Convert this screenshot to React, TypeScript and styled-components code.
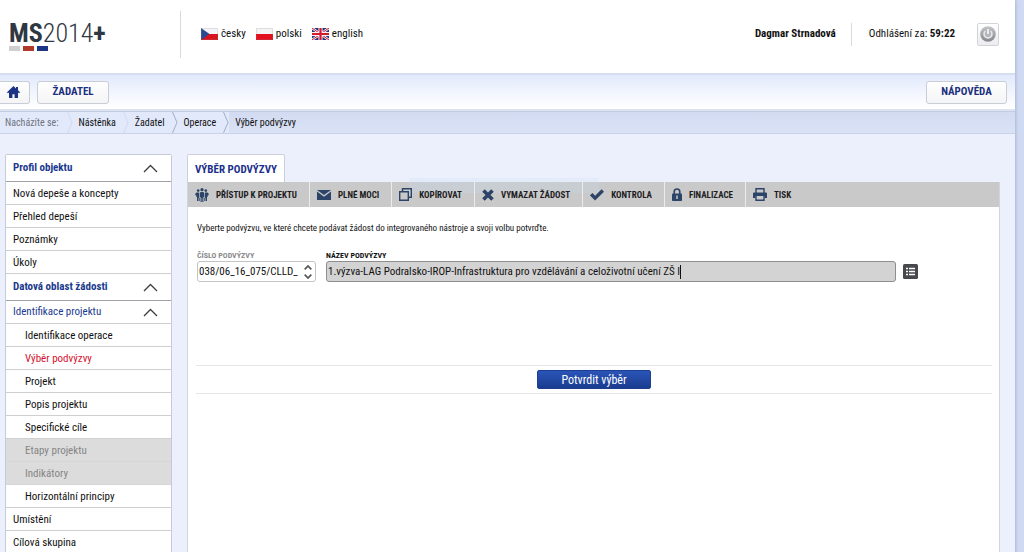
import React from "react";
import styled, { createGlobalStyle, css } from "styled-components";

const GlobalStyle = createGlobalStyle`
  * { box-sizing: border-box; }
  body {
    margin: 0;
    background: #d0daf2;
    color: #111;
    font: 11px/14px "Roboto Condensed", Roboto, "Liberation Sans", sans-serif;
    overflow: hidden;
  }
  button, input { font: inherit; color: inherit; }
  a { color: inherit; text-decoration: none; }
`;

const Shell = styled.div`
  margin-right: 9px;
  min-height: 100vh;
  background: #ecf0fc;
  box-shadow: 1px 0 3px #a9b5d6;
`;

const Header = styled.header`
  display: flex;
  align-items: center;
  height: 73px;
  padding: 0 16px 5px 9px;
  background: #fff;
`;

const Logo = styled.a`
  display: flex;
  flex-direction: column;
  width: 171px;
  padding-top: 3px;
  color: #2f3742;
  font-size: 26px;
  line-height: 25px;
  font-weight: 300;
  b { font-weight: 700; }
`;

const LogoBars = styled.span`
  display: flex;
  gap: 3px;
`;

const LogoBar = styled.i<{ $color: string }>`
  width: 11px;
  height: 5px;
  background: ${(p) => p.$color};
`;

const Divider = styled.span<{ $tall?: boolean }>`
  width: 1px;
  height: ${(p) => (p.$tall ? 47 : 23)}px;
  background: #d9d9dc;
`;

const Languages = styled.nav`
  display: flex;
  gap: 10px;
  margin-left: 20px;
`;

const Language = styled.a`
  display: flex;
  align-items: center;
  gap: 3px;
`;

const Account = styled.div`
  display: flex;
  align-items: center;
  margin-left: auto;
`;

const Timer = styled.span`
  margin: 0 22px 0 17px;
`;

const UserName = styled.b`
  margin-right: 15px;
`;

const PowerButton = styled.button`
  display: grid;
  place-items: center;
  width: 22px;
  height: 23px;
  padding: 0;
  border: 1px solid #d2d4da;
  border-radius: 2px;
  background: linear-gradient(#fff, #ececee);
`;

const NavBar = styled.nav`
  display: flex;
  align-items: center;
  justify-content: space-between;
  height: 38px;
  padding-right: 8px;
  border-top: 2px solid #d5deee;
  border-bottom: 2px solid #dce3f1;
  background: linear-gradient(#e1e9fc, #f4f7fe 60%, #fff);
`;

const NavGroup = styled.div`
  display: flex;
  gap: 7px;
`;

const NavButton = styled.button<{ $width: number; $flush?: boolean }>`
  display: grid;
  place-items: center;
  width: ${(p) => p.$width}px;
  height: 23px;
  padding: 0;
  border: 1px solid #c9cdd6;
  border-radius: 3px;
  background: linear-gradient(#fff, #f4f4f6);
  color: #1b2f80;
  font-weight: 700;
  ${(p) => p.$flush && css`
    padding-right: 2px;
    border-left: 0;
    border-radius: 0 3px 3px 0;
  `}
`;

const Breadcrumbs = styled.nav`
  display: flex;
  align-items: stretch;
  height: 23px;
  border-top: 1px solid #c2cbe2;
  border-bottom: 1px solid #c8d2ea;
  background: linear-gradient(#d2dbf1, #dae2f5);
  font-size: 10px;
  line-height: 21px;
`;

const Crumb = styled.span<{ $muted?: boolean; $open?: boolean }>`
  display: flex;
  padding-left: ${(p) => (p.$muted ? 5 : 6)}px;
  gap: ${(p) => (p.$muted ? 8 : 7)}px;
  color: ${(p) => (p.$muted ? "#70747f" : "#111")};
  background: ${(p) => (p.$open ? "transparent" : "#e2e9fa")};
  svg { display: block; }
`;

const Body = styled.div`
  display: flex;
  align-items: flex-start;
  gap: 15px;
  padding: 20px 15px 0 5px;
`;

const Sidebar = styled.nav`
  flex: none;
  width: 167px;
  border: 1px solid #c6cad6;
  border-radius: 2px;
  background: #fff;
`;

const Group = styled.button<{ $strong?: boolean }>`
  display: flex;
  align-items: center;
  justify-content: space-between;
  width: 100%;
  height: ${(p) => (p.$strong ? 27 : 23)}px;
  padding: 0 13px 0 7px;
  border: 0;
  border-bottom: 1px solid ${(p) => (p.$strong ? "#9fa3a8" : "#cfcfcf")};
  background: #fff;
  color: #1b3a8e;
  font-weight: ${(p) => (p.$strong ? 700 : 400)};
`;

const Item = styled.a<{ $nested?: boolean; $current?: boolean; $disabled?: boolean }>`
  display: block;
  height: 23px;
  padding-left: ${(p) => (p.$nested ? 19 : 7)}px;
  border-bottom: 1px solid ${(p) => (p.$disabled ? "#d6d6d6" : "#cfcfcf")};
  background: ${(p) => (p.$disabled ? "#dcdcdc" : "#fff")};
  color: ${(p) => (p.$disabled ? "#858585" : p.$current ? "#d4122e" : "#111")};
  line-height: 23px;
`;

const Content = styled.main`
  flex: 1;
  min-width: 0;
`;

const Tab = styled.h1`
  width: max-content;
  height: 28px;
  margin: 0;
  padding: 1px 7px 0;
  border: 1px solid #cdd0da;
  border-bottom: 0;
  border-radius: 2px 2px 0 0;
  background: #fff;
  color: #1b2f8a;
  font-size: 11px;
  line-height: 28px;
`;

const Panel = styled.section`
  position: relative;
  min-height: calc(100vh - 181px);
  border: 1px solid #d0d4de;
  border-top: 0;
  border-bottom: 0;
  background: #fff;
`;

const FadingTip = styled.div`
  position: absolute;
  top: -4px;
  left: 221px;
  width: 190px;
  height: 15px;
  background: linear-gradient(90deg, #c4dcf044, #c4dcf033);
  pointer-events: none;
`;

const Toolbar = styled.div`
  display: flex;
  height: 25px;
  background: #c9c9c9;
`;

const Tool = styled.button`
  position: relative;
  z-index: 1;
  display: flex;
  align-items: center;
  gap: 7px;
  padding: 0 12px 0 7px;
  border: 0;
  border-right: 1px solid #ececec;
  background: none;
  color: #1d1d1f;
  font-size: 9px;
  font-weight: 700;
  white-space: nowrap;
  &:last-child { border-right: 0; }
`;

const Hint = styled.p`
  margin: 0;
  padding: 14px 9px 0;
  font-size: 9px;
`;

const Fields = styled.form`
  display: flex;
  align-items: flex-end;
  padding: 16px 81px 0 9px;
`;

const Field = styled.div<{ $width?: number }>`
  flex: ${(p) => (p.$width ? `0 0 ${p.$width}px` : "1")};
  min-width: 0;
  margin-right: 10px;
`;

const Label = styled.label<{ $muted?: boolean }>`
  display: block;
  color: ${(p) => (p.$muted ? "#8b8b8b" : "#111")};
  font-size: 8px;
  line-height: 10px;
  font-weight: 700;
`;

const InputBox = styled.div<{ $filled?: boolean }>`
  display: flex;
  align-items: center;
  height: 21px;
  padding: 1px 0 0 1px;
  border: 1px solid ${(p) => (p.$filled ? "#8e8e8e" : "#c4c4c4")};
  border-radius: 3px;
  background: ${(p) => (p.$filled ? "#d3d3d3" : "#fff")};
`;

const Input = styled.input<{ $fit?: boolean }>`
  flex: ${(p) => (p.$fit ? "0 1 auto" : "1")};
  min-width: 0;
  padding: 0;
  border: 0;
  outline: 0;
  background: none;
  font-size: 11px;
  ${(p) => p.$fit && css`
    field-sizing: content;
    caret-color: transparent;
  `}
`;

const Caret = styled.span`
  width: 1px;
  height: 14px;
  background: #111;
`;

const Spinner = styled.span`
  display: flex;
  flex-direction: column;
  gap: 4px;
  padding: 0 3px;
`;

const BareButton = styled.button`
  display: block;
  padding: 0;
  border: 0;
  background: none;
  svg { display: block; }
`;

const ListButton = styled(BareButton)`
  margin: 0 0 3px -3px;
`;

const Actions = styled.div`
  display: flex;
  justify-content: center;
  margin: 83px 7px 0 8px;
  padding: 4px 0;
  border-top: 1px solid #e6e6e6;
  border-bottom: 1px solid #e6e6e6;
`;

const Confirm = styled.button`
  width: 114px;
  height: 19px;
  padding: 0;
  border: 1px solid #1c3f91;
  border-radius: 2px;
  background: linear-gradient(#2a55b8, #1a3c90);
  color: #fff;
  font-size: 12px;
  line-height: 16px;
`;

const Chevron = () => (
  <svg width="15" height="9" viewBox="0 0 15 9" fill="none" stroke="#3c3f44" strokeWidth="1.3">
    <path d="M1 8 7.500 1.500 14 8" />
  </svg>
);

const SmallChevron = ({ down }: { down?: boolean }) => (
  <svg width="8" height="5" viewBox="0 0 8 5" fill="none" stroke="#555" strokeWidth="1.7">
    <path d={down ? "M.7.700 4 4 7.300.7" : "M.7 4.300 4 1 7.300 4.300"} />
  </svg>
);

const CrumbArrow = ({ faint }: { faint?: boolean }) => (
  <svg width="6" height="21" viewBox="0 0 6 21">
    <path d="M.5 0 5 10.500.5 21" fill="none" stroke={faint ? "#d0d9ef" : "#a3adc6"} />
  </svg>
);

const CzechFlag = () => (
  <svg width="17" height="12" viewBox="0 0 17 12">
    <path fill="#f4f4f8" d="M0 0h17v6H0z" />
    <path fill="#d8141e" d="M0 6h17v6H0z" />
    <path fill="#2a4a92" d="m0 0 8.500 6L0 12z" />
    <path fill="none" stroke="#8883" d="M.5.500h16v11H.5z" />
  </svg>
);

const PolishFlag = () => (
  <svg width="17" height="12" viewBox="0 0 17 12">
    <path fill="#f4f4f6" d="M0 0h17v6H0z" />
    <path fill="#e3101f" d="M0 6h17v6H0z" />
    <path fill="none" stroke="#8883" d="M.5.500h16v11H.5z" />
  </svg>
);

const BritishFlag = () => (
  <svg width="17" height="12" viewBox="0 0 17 12">
    <path fill="#28337e" d="M0 0h17v12H0z" />
    <path stroke="#f2eef5" strokeWidth="2.400" d="m0 0 17 12M17 0 0 12" />
    <path stroke="#d22034" strokeWidth="1" d="m0 0 17 12M17 0 0 12" />
    <path stroke="#f6f2f6" strokeWidth="4" d="M8.500 0v12M0 6h17" />
    <path stroke="#d8182c" strokeWidth="2.200" d="M8.500 0v12M0 6h17" />
  </svg>
);

const PowerIcon = () => (
  <svg width="16" height="16" viewBox="0 0 16 16" fill="none">
    <defs>
      <linearGradient id="power" x2="0" y2="1">
        <stop stopColor="#c3c5c9" />
        <stop offset="1" stopColor="#84878d" />
      </linearGradient>
    </defs>
    <circle cx="8" cy="8" r="7.800" fill="url(#power)" />
    <circle cx="8" cy="8" r="4.400" fill="#b4b6ba" />
    <path d="M5.400 5a4 4 0 1 0 5.200 0" stroke="#e8e9ea" strokeWidth="1.500" />
    <path d="M8 3v5" stroke="#fafafa" strokeWidth="1.600" />
  </svg>
);

const HomeIcon = () => (
  <svg width="13" height="12" viewBox="0 0 13 12" fill="#1b3486">
    <path d="M6.500 0 0 6.300l.9 1L2 6.400V12h3.400V8.300h2.200V12H11V6.400l1.100.900.900-1L11 4.300V1H9v1.400z" />
  </svg>
);

const PeopleIcon = () => (
  <svg width="14" height="14" viewBox="0 0 14 14" fill="#2c4468">
    <circle cx="7" cy="1.700" r="1.600" />
    <circle cx="3.200" cy="2.600" r="1.300" />
    <circle cx="10.800" cy="2.600" r="1.300" />
    <path d="M5.700 3.900h2.600l.9 1v4H8.400V14H7.300v-4h-.6v4H5.600V8.900h-.8v-4zM1.500 4.500h2.600v5.300h.6V13H3.600v-3h-.5v3H2V8.900l-.7-.1v-1.600H.3V5.700zM12.500 4.500H9.900v5.300h-.6V13h1.100v-3h.5v3H12V8.900l.7-.1v-1.600h1V5.700z" />
  </svg>
);

const MailIcon = () => (
  <svg width="14" height="10" viewBox="0 0 15 10" preserveAspectRatio="none" fill="#2c4468">
    <path d="M0 0h15L7.500 5zM0 1.500l7.500 5.300L15 1.500V10H0z" />
  </svg>
);

const CopyIcon = () => (
  <svg width="13" height="13" viewBox="0 0 13 13" fill="none" stroke="#2c4468" strokeWidth="1.400">
    <path d="M.7 3.700h8.600v8.600H.7z" />
    <path d="M3.500 3.500V.7h8.800v8.600H9.500" />
  </svg>
);

const CrossIcon = () => (
  <svg width="12" height="12" viewBox="0 0 12 12" stroke="#2c4468" strokeWidth="3.600">
    <path d="m1.500 1.500 9 9m0-9-9 9" />
  </svg>
);

const CheckIcon = () => (
  <svg width="14" height="12" viewBox="0 0 14 12" fill="none" stroke="#2c4468" strokeWidth="3.400">
    <path d="m1.200 5.200 3.900 4 7.700-7.700" />
  </svg>
);

const LockIcon = () => (
  <svg width="10" height="13" viewBox="0 0 10 13">
    <path d="M2.200 6.500V3.800a2.800 2.800 0 0 1 5.600 0v2.700" fill="none" stroke="#2c4468" strokeWidth="1.600" />
    <rect y="5.500" width="10" height="7.500" rx=".8" fill="#2c4468" />
    <path d="M5 7.500v3.500" stroke="#c9c9c9" strokeWidth="1.500" />
  </svg>
);

const PrintIcon = () => (
  <svg width="14" height="13" viewBox="0 0 14 13">
    <path d="M3 5V.8h8V5" fill="none" stroke="#2c4468" strokeWidth="1.400" />
    <path d="M0 5.500Q0 4.500 1 4.500h12q1 0 1 1V10h-2.500V8h-9v2H0z" fill="#2c4468" />
    <path d="M3 8v4.200h8V8" fill="none" stroke="#2c4468" strokeWidth="1.400" />
  </svg>
);

const ListIcon = () => (
  <svg width="15" height="15" viewBox="0 0 15 15">
    <rect width="15" height="15" rx="1.500" fill="#47494c" />
    <path d="M3 4.500h2m1 0h6M3 7.500h2m1 0h6M3 10.500h2m1 0h6" stroke="#fff" strokeWidth="1.600" />
  </svg>
);

const tools = [
  { label: "PŘÍSTUP K PROJEKTU", icon: <PeopleIcon /> },
  { label: "PLNÉ MOCI", icon: <MailIcon /> },
  { label: "KOPÍROVAT", icon: <CopyIcon /> },
  { label: "VYMAZAT ŽÁDOST", icon: <CrossIcon /> },
  { label: "KONTROLA", icon: <CheckIcon /> },
  { label: "FINALIZACE", icon: <LockIcon /> },
  { label: "TISK", icon: <PrintIcon /> },
];

const projectItems = [
  { label: "Identifikace operace" },
  { label: "Výběr podvýzvy", current: true },
  { label: "Projekt" },
  { label: "Popis projektu" },
  { label: "Specifické cíle" },
  { label: "Etapy projektu", disabled: true },
  { label: "Indikátory", disabled: true },
  { label: "Horizontální principy" },
];

export default function App() {
  return (
    <>
      <GlobalStyle />
      <Shell>
        <Header>
          <Logo href="#">
            <span><b>MS</b>2014<b>+</b></span>
            <LogoBars>
              <LogoBar $color="#cfcfd1" />
              <LogoBar $color="#b03a2a" />
              <LogoBar $color="#1d3585" />
            </LogoBars>
          </Logo>
          <Divider $tall />
          <Languages>
            <Language href="#"><CzechFlag />česky</Language>
            <Language href="#"><PolishFlag />polski</Language>
            <Language href="#"><BritishFlag />english</Language>
          </Languages>
          <Account>
            <UserName>Dagmar Strnadová</UserName>
            <Divider />
            <Timer>Odhlášení za: <b>59:22</b></Timer>
            <PowerButton aria-label="Odhlásit"><PowerIcon /></PowerButton>
          </Account>
        </Header>
        <NavBar>
          <NavGroup>
            <NavButton $width={30} $flush aria-label="Domů"><HomeIcon /></NavButton>
            <NavButton $width={72}>ŽADATEL</NavButton>
          </NavGroup>
          <NavButton $width={81}>NÁPOVĚDA</NavButton>
        </NavBar>
        <Breadcrumbs>
          <Crumb $muted>Nacházíte se:<CrumbArrow faint /></Crumb>
          <Crumb><a href="#">Nástěnka</a><CrumbArrow faint /></Crumb>
          <Crumb><a href="#">Žadatel</a><CrumbArrow /></Crumb>
          <Crumb><a href="#">Operace</a><CrumbArrow /></Crumb>
          <Crumb $open>Výběr podvýzvy</Crumb>
        </Breadcrumbs>
        <Body>
          <Sidebar>
            <Group $strong>Profil objektu<Chevron /></Group>
            <Item href="#">Nová depeše a koncepty</Item>
            <Item href="#">Přehled depeší</Item>
            <Item href="#">Poznámky</Item>
            <Item href="#">Úkoly</Item>
            <Group $strong>Datová oblast žádosti<Chevron /></Group>
            <Group>Identifikace projektu<Chevron /></Group>
            {projectItems.map((item) => (
              <Item key={item.label} href="#" $nested $current={item.current} $disabled={item.disabled}>
                {item.label}
              </Item>
            ))}
            <Item href="#">Umístění</Item>
            <Item href="#">Cílová skupina</Item>
          </Sidebar>
          <Content>
            <Tab>VÝBĚR PODVÝZVY</Tab>
            <Panel>
              <Toolbar>
                {tools.map((tool) => (
                  <Tool key={tool.label}>{tool.icon}{tool.label}</Tool>
                ))}
              </Toolbar>
              <FadingTip />
              <Hint>Vyberte podvýzvu, ve které chcete podávat žádost do integrovaného nástroje a svoji volbu potvrďte.</Hint>
              <Fields onSubmit={(e) => e.preventDefault()}>
                <Field $width={119}>
                  <Label htmlFor="number" $muted>ČÍSLO PODVÝZVY</Label>
                  <InputBox>
                    <Input id="number" defaultValue="038/06_16_075/CLLD_" />
                    <Spinner>
                      <BareButton type="button" aria-label="Předchozí"><SmallChevron /></BareButton>
                      <BareButton type="button" aria-label="Další"><SmallChevron down /></BareButton>
                    </Spinner>
                  </InputBox>
                </Field>
                <Field>
                  <Label htmlFor="name">NÁZEV PODVÝZVY</Label>
                  <InputBox $filled>
                    <Input
                      id="name"
                      $fit
                      autoFocus
                      defaultValue="1.výzva-LAG Podralsko-IROP-Infrastruktura pro vzdělávání a celoživotní učení ZŠ I"
                    />
                    <Caret />
                  </InputBox>
                </Field>
                <ListButton type="button" aria-label="Vybrat ze seznamu"><ListIcon /></ListButton>
              </Fields>
              <Actions>
                <Confirm>Potvrdit výběr</Confirm>
              </Actions>
            </Panel>
          </Content>
        </Body>
      </Shell>
    </>
  );
}
